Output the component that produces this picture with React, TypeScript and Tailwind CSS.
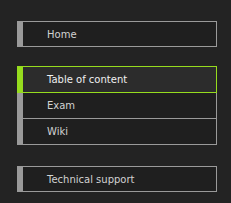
const groups = [
  [{ label: 'Home' }],
  [{ label: 'Table of content', active: true }, { label: 'Exam' }, { label: 'Wiki' }],
  [{ label: 'Technical support' }],
];

function NavItem({ label, active, first, single }: { label: string; active?: boolean; first?: boolean; single?: boolean }) {
  const base =
    'flex items-center w-[200px] pl-[24px] border-r border-b border-l-[6px] text-[10px]';
  const state = active
    ? 'bg-[#2c2c2c] border-[#96dc1e] text-[#f0f0f0]'
    : 'bg-[#1f1f1f] border-[#9a9a9a] text-[#d2d2d2]';
  const top = single ? 'border-t h-[26px]' : first ? 'border-t h-[27px]' : 'h-[26px]';
  return <div className={`${base} ${state} ${top}`}>{label}</div>;
}

export default function App() {
  return (
    <div
      className="w-[231px] h-[203px] bg-[#232323] pt-[21px] pl-[17px]"
      style={{ fontFamily: '"DejaVu Sans", sans-serif' }}
    >
      <nav className="flex flex-col">
        {groups.map((items, gi) => (
          <div
            key={gi}
            className={gi === 1 ? 'mt-[19px] flex flex-col' : gi === 2 ? 'mt-[21px] flex flex-col' : 'flex flex-col'}
          >
            {items.map((it, i) => (
              <NavItem
                key={it.label}
                label={it.label}
                active={'active' in it ? it.active : false}
                first={i === 0}
                single={items.length === 1}
              />
            ))}
          </div>
        ))}
      </nav>
    </div>
  );
}
